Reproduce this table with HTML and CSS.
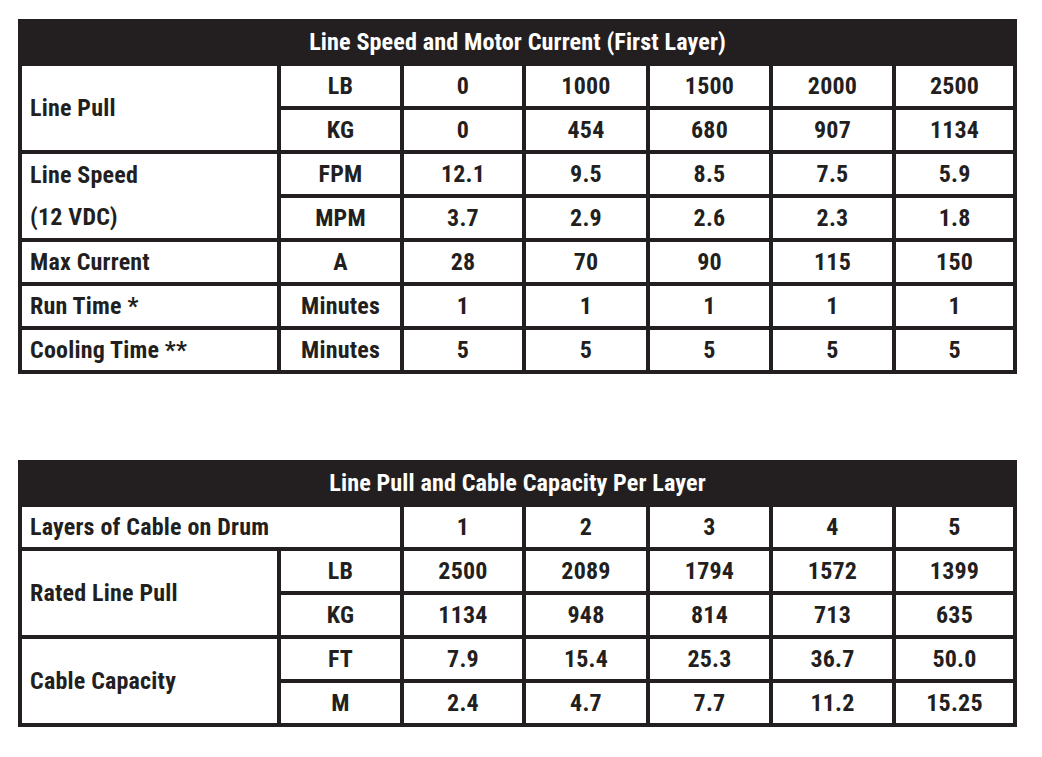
FILE: index.html
```html
<!DOCTYPE html>
<html lang="en">
<head>
<meta charset="utf-8">
<title>Winch Specifications</title>
<link rel="stylesheet" href="styles.css">
</head>
<body>
<main class="page">
  <table class="spec spec-speed">
    <colgroup>
      <col class="c-label"><col class="c-unit"><col class="c-a"><col class="c-b"><col class="c-c"><col class="c-d"><col class="c-e">
    </colgroup>
    <thead>
      <tr><th colspan="7" class="title">Line Speed and Motor Current (First Layer)</th></tr>
    </thead>
    <tbody>
      <tr><th rowspan="2" class="label">Line Pull</th><td>LB</td><td>0</td><td>1000</td><td>1500</td><td>2000</td><td>2500</td></tr>
      <tr><td>KG</td><td>0</td><td>454</td><td>680</td><td>907</td><td>1134</td></tr>
      <tr><th rowspan="2" class="label label-two">Line Speed<br>(12 VDC)</th><td>FPM</td><td>12.1</td><td>9.5</td><td>8.5</td><td>7.5</td><td>5.9</td></tr>
      <tr><td>MPM</td><td>3.7</td><td>2.9</td><td>2.6</td><td>2.3</td><td>1.8</td></tr>
      <tr><th class="label">Max Current</th><td>A</td><td>28</td><td>70</td><td>90</td><td>115</td><td>150</td></tr>
      <tr><th class="label">Run Time *</th><td>Minutes</td><td>1</td><td>1</td><td>1</td><td>1</td><td>1</td></tr>
      <tr><th class="label">Cooling Time **</th><td>Minutes</td><td>5</td><td>5</td><td>5</td><td>5</td><td>5</td></tr>
    </tbody>
  </table>

  <table class="spec spec-layer">
    <colgroup>
      <col class="c-label"><col class="c-unit"><col class="c-a"><col class="c-b"><col class="c-c"><col class="c-d"><col class="c-e">
    </colgroup>
    <thead>
      <tr><th colspan="7" class="title">Line Pull and Cable Capacity Per Layer</th></tr>
    </thead>
    <tbody>
      <tr><th colspan="2" class="label">Layers of Cable on Drum</th><td>1</td><td>2</td><td>3</td><td>4</td><td>5</td></tr>
      <tr><th rowspan="2" class="label">Rated Line Pull</th><td>LB</td><td>2500</td><td>2089</td><td>1794</td><td>1572</td><td>1399</td></tr>
      <tr><td>KG</td><td>1134</td><td>948</td><td>814</td><td>713</td><td>635</td></tr>
      <tr><th rowspan="2" class="label">Cable Capacity</th><td>FT</td><td>7.9</td><td>15.4</td><td>25.3</td><td>36.7</td><td>50.0</td></tr>
      <tr><td>M</td><td>2.4</td><td>4.7</td><td>7.7</td><td>11.2</td><td>15.25</td></tr>
    </tbody>
  </table>
</main>
</body>
</html>
```

FILE: styles.css
```css
html, body {
  margin: 0;
  padding: 0;
  background: #ffffff;
}

.page {
  padding: 19px 0 0 18px;
  font-family: Roboto, "Liberation Sans", Arial, sans-serif;
  font-stretch: condensed;
  font-weight: bold;
  color: #231f20;
}

.spec {
  table-layout: fixed;
  width: 999px;
  border-collapse: separate;
  border-spacing: 4px;
  background: #231f20;
}

.spec-speed {
  margin-bottom: 86px;
}

.c-label { width: 255px; }
.c-unit { width: 119px; }
.c-a { width: 118px; }
.c-b { width: 120px; }
.c-c { width: 119px; }
.c-d { width: 119px; }
.c-e { width: 117px; }

.spec th,
.spec td {
  padding: 0;
  height: 40px;
  background: #ffffff;
  text-align: center;
  vertical-align: middle;
  font-size: 24px;
  font-weight: bold;
  letter-spacing: 0.2px;
  line-height: 40px;
  white-space: nowrap;
}

.spec .title {
  height: 39px;
  background: #231f20;
  color: #ffffff;
  font-size: 24.2px;
  letter-spacing: 0.1px;
  line-height: 37px;
}

.spec .label {
  text-align: left;
  padding-left: 8px;
}

.spec .label-two {
  line-height: 42px;
}
```
